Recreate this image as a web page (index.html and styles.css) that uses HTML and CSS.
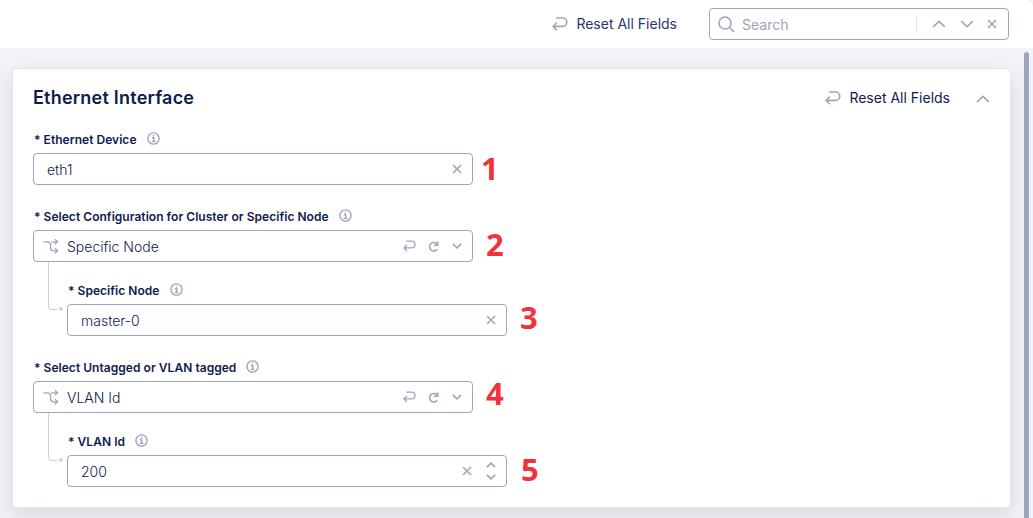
FILE: index.html
```html
<!DOCTYPE html>
<html lang="en">
<head>
<meta charset="utf-8">
<title>Ethernet Interface</title>
<link rel="stylesheet" href="styles.css">
</head>
<body>
<svg class="defs" width="0" height="0">
  <symbol id="reset" viewBox="0 0 16 14"><path d="M4 1H10.6A4.2 4.2 0 0 1 10.6 9.4H1.2M4.9 5.5L1.1 9.4L4.9 13.2"/></symbol>
  <symbol id="up" viewBox="0 0 14 8"><path d="M1.2 6.9L7 1.3L12.8 6.9"/></symbol>
  <symbol id="down" viewBox="0 0 14 8"><path d="M1.2 1.1L7 6.7L12.8 1.1"/></symbol>
  <symbol id="close" viewBox="0 0 10 10"><path d="M1 1L9 9M9 1L1 9"/></symbol>
  <symbol id="info" viewBox="0 0 13 13"><circle cx="6.5" cy="6.5" r="5.6"/><path d="M5 5.7H6.7V9.3M4.7 9.4H8.5M6.4 2.9V4.4"/></symbol>
  <symbol id="redo" viewBox="0 0 11 11"><path d="M9.2 8.2A4.2 4.2 0 1 1 8.6 2.6L9.4 3.6M9.7 .5V4.2H6"/></symbol>
  <symbol id="branch" viewBox="0 0 16 15"><path d="M.5 2.8H4Q7.6 2.8 7.6 6V8.8Q7.6 11.8 10.4 11.8H14.5M8.2 2.8H14.5M11.9 .3L14.6 2.8L11.9 5.3M11.9 9.3L14.6 11.8L11.9 14.3"/></symbol>
</svg>
<header class="topbar">
  <div class="reset"><svg class="i-reset"><use href="#reset"/></svg><span>Reset All Fields</span></div>
  <div class="search">
    <svg class="i-search" viewBox="0 0 17 17"><circle cx="7" cy="7" r="6"/><path d="M11.3 11.3L16 16"/></svg>
    <span class="placeholder">Search</span>
    <span class="divider"></span>
    <svg class="i-chev"><use href="#up"/></svg>
    <svg class="i-chev next"><use href="#down"/></svg>
    <svg class="i-close"><use href="#close"/></svg>
  </div>
</header>
<main class="content">
  <section class="card">
    <div class="card-head">
      <h1>Ethernet Interface</h1>
      <div class="reset"><svg class="i-reset"><use href="#reset"/></svg><span>Reset All Fields</span></div>
      <svg class="i-chev"><use href="#up"/></svg>
    </div>
    <div class="field first">
      <div class="label"><span>* Ethernet Device</span><svg class="i-info"><use href="#info"/></svg></div>
      <div class="row">
        <div class="input plain"><span class="value">eth1</span><svg class="i-close"><use href="#close"/></svg></div>
        <span class="num one">1</span>
      </div>
    </div>
    <div class="field group">
      <div class="label"><span>* Select Configuration for Cluster or Specific Node</span><svg class="i-info"><use href="#info"/></svg></div>
      <div class="row">
        <div class="input select"><svg class="i-branch"><use href="#branch"/></svg><span class="value">Specific Node</span><svg class="i-back"><use href="#reset"/></svg><svg class="i-redo"><use href="#redo"/></svg><svg class="i-small"><use href="#down"/></svg></div>
        <span class="num two">2</span>
      </div>
    </div>
    <div class="nest">
      <div class="connector"></div>
      <div class="field child">
        <div class="label"><span>* Specific Node</span><svg class="i-info"><use href="#info"/></svg></div>
        <div class="row">
          <div class="input plain"><span class="value">master-0</span><svg class="i-close"><use href="#close"/></svg></div>
          <span class="num three">3</span>
        </div>
      </div>
    </div>
    <div class="field group">
      <div class="label"><span>* Select Untagged or VLAN tagged</span><svg class="i-info"><use href="#info"/></svg></div>
      <div class="row">
        <div class="input select"><svg class="i-branch"><use href="#branch"/></svg><span class="value">VLAN Id</span><svg class="i-back"><use href="#reset"/></svg><svg class="i-redo"><use href="#redo"/></svg><svg class="i-small"><use href="#down"/></svg></div>
        <span class="num four">4</span>
      </div>
    </div>
    <div class="nest">
      <div class="connector"></div>
      <div class="field child">
        <div class="label"><span>* VLAN Id</span><svg class="i-info"><use href="#info"/></svg></div>
        <div class="row">
          <div class="input plain"><span class="value">200</span><svg class="i-close"><use href="#close"/></svg><span class="stepper"><svg class="i-small"><use href="#up"/></svg><svg class="i-small"><use href="#down"/></svg></span></div>
          <span class="num five">5</span>
        </div>
      </div>
    </div>
  </section>
  <div class="scroll"><div class="thumb"></div></div>
</main>
</body>
</html>
```
FILE: styles.css
```css
* { box-sizing: border-box; }
body {
  margin: 0;
  height: 518px;
  overflow: hidden;
  background: #f3f4f7;
  font-family: Inter, "Liberation Sans", sans-serif;
  font-size: 14px;
  color: #0e1b4d;
}
svg {
  display: block;
  flex: none;
  fill: none;
  stroke: #9da6ba;
  stroke-width: 1.6;
}
.defs { position: absolute; }
.topbar {
  display: flex;
  align-items: center;
  justify-content: flex-end;
  height: 48px;
  padding-right: 24px;
  background: #fff;
  border-top-right-radius: 8px;
}
.reset {
  display: flex;
  align-items: center;
  gap: 8px;
  line-height: 20px;
  white-space: nowrap;
}
.topbar .reset { margin-right: 32px; color: #283574; }
.i-reset { width: 16px; height: 14px; }
.search {
  display: flex;
  align-items: center;
  width: 300px;
  height: 32px;
  padding: 0 11px 0 8px;
  border: 1px solid #9da6ba;
  border-radius: 4px;
}
.i-search { width: 17px; height: 17px; }
.placeholder { flex: 1; margin-left: 7px; color: #9da6ba; }
.divider { width: 1px; height: 16px; margin-right: 15px; background: #e1e4f2; }
.i-chev { width: 14px; height: 8px; }
.next { margin: 0 13px 0 14px; }
.i-close { width: 10px; height: 10px; }
.content { display: flex; height: 470px; padding: 20px 4px 0 12px; }
.card {
  width: 999px;
  height: 440px;
  padding: 0 20px;
  background: #fff;
  border: 1px solid #e2e5f0;
  border-radius: 4px;
  box-shadow: 0 8px 24px rgba(30, 40, 80, .14);
}
.card-head { display: flex; align-items: center; height: 58px; }
h1 { flex: 1; margin: 0; font-size: 18px; font-weight: 600; line-height: 24px; letter-spacing: .22px; }
.card-head .reset { margin-right: 26px; }
.card-head .i-chev { margin-top: 2px; }
.field { display: flex; flex-direction: column; }
.label {
  display: flex;
  align-items: center;
  gap: 10px;
  height: 24px;
  padding: 0 0 4px 1px;
  font-size: 12px;
  font-weight: 600;
  letter-spacing: .04px;
}
.label .i-info { margin-top: -1px; }
.i-info { width: 13px; height: 13px; stroke-width: 1.4; }
.first { padding-top: 2px; }
.group { padding-top: 21px; }
.row { display: flex; align-items: center; height: 32px; }
.input {
  display: flex;
  align-items: center;
  width: 440px;
  height: 32px;
  padding: 0 10.5px 0 13px;
  border: 1px solid #9da6ba;
  border-radius: 4px;
}
.select { padding-left: 9px; }
.value { flex: 1; padding-top: 1px; font-weight: 300; line-height: 17px; }
.i-branch { width: 16px; height: 15px; margin-right: 8px; stroke-width: 1.3; }
.i-back { width: 13px; height: 12px; margin-right: 12px; }
.i-redo { width: 11px; height: 11px; margin-right: 13px; }
.i-small { width: 10px; height: 6px; stroke-width: 2.2; }
.stepper { display: flex; flex-direction: column; gap: 6px; margin-left: 14px; }
.num {
  margin-left: 13px;
  font: 700 31px/32px "Open Sans", sans-serif;
  color: #f2323b;
}
.one { margin-left: 8px; padding-bottom: 2px; }
.two { padding-bottom: 4px; }
.three { padding-bottom: 6px; }
.four { padding-bottom: 8px; }
.five { margin-left: 14px; padding-bottom: 4px; }
.nest { display: flex; height: 74px; }
.connector {
  position: relative;
  width: 10px;
  height: 48px;
  margin: 0 9px 0 15px;
  border: solid #cdd2e2;
  border-width: 0 0 1px 1px;
  border-bottom-left-radius: 4px;
}
.connector::after {
  content: "";
  position: absolute;
  right: -5px;
  bottom: -2px;
  width: 4px;
  height: 4px;
  border-radius: 50%;
  background: #cdd2e2;
}
.child { padding-top: 18px; }
.scroll { flex: 1; display: flex; justify-content: flex-end; margin-top: -16px; }
.thumb { width: 5px; height: 480px; border-radius: 3px 3px 0 0; background: #9da6ba; }
```
